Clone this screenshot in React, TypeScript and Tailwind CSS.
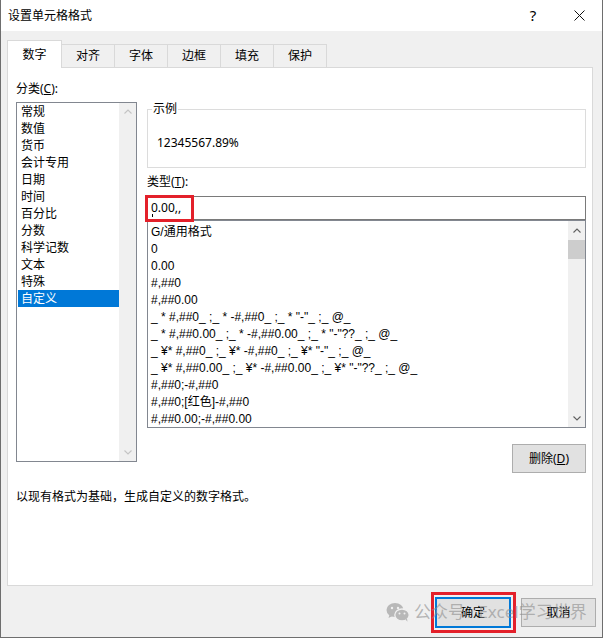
import React from "react";

const categories = [
  "常规",
  "数值",
  "货币",
  "会计专用",
  "日期",
  "时间",
  "百分比",
  "分数",
  "科学记数",
  "文本",
  "特殊",
  "自定义",
];

const formats = [
  "G/通用格式",
  "0",
  "0.00",
  "#,##0",
  "#,##0.00",
  '_ * #,##0_ ;_ * -#,##0_ ;_ * "-"_ ;_ @_',
  '_ * #,##0.00_ ;_ * -#,##0.00_ ;_ * "-"??_ ;_ @_',
  '_ ¥* #,##0_ ;_ ¥* -#,##0_ ;_ ¥* "-"_ ;_ @_',
  '_ ¥* #,##0.00_ ;_ ¥* -#,##0.00_ ;_ ¥* "-"??_ ;_ @_',
  "#,##0;-#,##0",
  "#,##0;[红色]-#,##0",
  "#,##0.00;-#,##0.00",
];

const tabs = ["对齐", "字体", "边框", "填充", "保护"];

function Chevron({ up, color }: { up?: boolean; color: string }) {
  return (
    <svg width="8" height="5" viewBox="0 0 8 5">
      <polyline
        points={up ? "0.5,4.5 4,1 7.5,4.5" : "0.5,0.5 4,4 7.5,0.5"}
        fill="none"
        stroke={color}
        strokeWidth="1.1"
      />
    </svg>
  );
}

function WeChatMark() {
  return (
    <svg width="24" height="20" viewBox="0 0 24 20">
      <ellipse cx="9" cy="8" rx="8.5" ry="7" fill="#b8b8b8" />
      <path d="M3.5 12.5 L2.5 16 L6.5 14 Z" fill="#b8b8b8" />
      <circle cx="6" cy="6" r="1.2" fill="#f0f0f0" />
      <circle cx="12" cy="6" r="1.2" fill="#f0f0f0" />
      <ellipse cx="16" cy="13" rx="7.2" ry="6" fill="#b8b8b8" stroke="#f0f0f0" strokeWidth="1.3" />
      <path d="M19.5 17.5 L21.5 19.8 L21 16.5 Z" fill="#b8b8b8" />
      <circle cx="13.5" cy="11.5" r="1" fill="#f0f0f0" />
      <circle cx="18.5" cy="11.5" r="1" fill="#f0f0f0" />
    </svg>
  );
}

export default function App() {
  return (
    <div className="font-['Noto_Sans','Noto_Sans_CJK_SC',sans-serif] relative w-[603px] h-[638px] bg-[#f0f0f0] border-l border-r border-b border-[#6e6e6e] text-[12px] text-black flex flex-col overflow-hidden">
      {/* caption bar */}
      <div className="h-[31px] bg-white flex items-center justify-between shrink-0">
        <span className="pl-[7px] leading-[16px]">设置单元格格式</span>
        <div className="flex h-full">
          <div className="w-[46px] flex items-center justify-center text-[15px] leading-none">?</div>
          <div className="w-[46px] flex items-center justify-center">
            <svg width="11" height="11" viewBox="0 0 11 11">
              <path d="M0.5 0.5 L10.5 10.5 M10.5 0.5 L0.5 10.5" stroke="#111" strokeWidth="1" />
            </svg>
          </div>
        </div>
      </div>

      {/* tab strip */}
      <div className="flex items-end h-[27px] ml-[6px] mt-[9px] shrink-0">
        <div className="relative z-10 w-[55px] h-[28px] mb-[-1px] bg-white border border-b-0 border-[#d9d9d9] flex items-center justify-center leading-[16px]">
          数字
        </div>
        {tabs.map((t) => (
          <div
            key={t}
            className="w-[53px] h-[23px] bg-[#f0f0f0] border-t border-r border-[#d9d9d9] flex items-center justify-center leading-[16px]"
          >
            {t}
          </div>
        ))}
      </div>

      {/* tab page */}
      <div className="ml-[6px] w-[586px] h-[519px] bg-white border border-[#d9d9d9] pl-[8px] pt-[13px] shrink-0">
        <div className="flex items-start">
          {/* category list */}
          <div className="w-[121px] flex flex-col">
            <div className="leading-[16px]">
              分类(<span className="underline">C</span>):
            </div>
            <div className="mt-[5px] h-[360px] border border-[#828790] flex">
              <div className="flex-1 min-w-0">
                {categories.map((c, i) => (
                  <div
                    key={c}
                    className={
                      i === categories.length - 1
                        ? "ml-[1px] h-[17px] leading-[17px] pl-[3px] bg-[#0078d7] text-white"
                        : "ml-[1px] h-[17px] leading-[17px] pl-[3px]"
                    }
                  >
                    {c}
                  </div>
                ))}
              </div>
              <div className="w-[17px] bg-[#f0f0f0] flex flex-col justify-between">
                <div className="h-[17px] flex items-center justify-center">
                  <Chevron up color="#c4c4c4" />
                </div>
                <div className="h-[17px] flex items-center justify-center">
                  <Chevron color="#c4c4c4" />
                </div>
              </div>
            </div>
          </div>

          {/* right side */}
          <div className="w-[439px] ml-[10px] flex flex-col">
            <fieldset className="mt-[20px] h-[67px] border border-[#dcdcdc] m-0 p-0">
              <legend className="ml-[4px] px-[1px] leading-[16px]">示例</legend>
              <div className="mt-[18px] pl-[9px] leading-[16px]">12345567.89%</div>
            </fieldset>

            <div className="mt-[6px] leading-[16px]">
              类型(<span className="underline">T</span>):
            </div>
            <div className="relative mt-[6px] h-[24px] border border-[#7a7a7a] pl-[3px] leading-[22px]">
              0.00,,
              <span className="absolute left-[4px] top-[17px] w-px h-[3px] bg-black" />
              <span className="absolute left-[-3px] top-[-2px] w-[49px] h-[27px] border-[3px] border-[#e3202a]" />
            </div>

            <div className="h-[208px] border border-[#828790] flex">
              <div className="flex-1 min-w-0 pt-[3px] whitespace-pre font-['Liberation_Sans','Noto_Sans_CJK_SC',sans-serif]">
                {formats.map((f) => (
                  <div key={f} className="h-[17px] leading-[17px] pl-[3px]">
                    {f}
                  </div>
                ))}
              </div>
              <div className="w-[17px] bg-[#f0f0f0] flex flex-col">
                <div className="h-[19px] flex items-center justify-center">
                  <Chevron up color="#606060" />
                </div>
                <div className="h-[19px] bg-[#cdcdcd]" />
                <div className="flex-1" />
                <div className="h-[18px] flex items-center justify-center">
                  <Chevron color="#606060" />
                </div>
              </div>
            </div>

            <div className="self-end mt-[16px] w-[74px] h-[29px] bg-[#e1e1e1] border border-[#adadad] flex items-center justify-center leading-[16px]">
              删除(<span className="underline">D</span>)
            </div>
          </div>
        </div>

        <div className="mt-[16px] leading-[16px]">以现有格式为基础，生成自定义的数字格式。</div>
      </div>

      {/* dialog buttons */}
      <div className="flex justify-end items-center gap-[10px] pr-[6px] mt-[11px]">
        <div className="relative">
          <div className="w-[76px] h-[31px] bg-[#e1e1e1] border-2 border-[#0078d7] flex items-center justify-center leading-[16px]">
            确定
          </div>
          <span className="absolute left-[-4px] right-[-5px] top-[-5px] bottom-[-5px] border-[3px] border-[#e3202a]" />
        </div>
        <div className="w-[75px] h-[29px] bg-[#e1e1e1] border border-[#adadad] flex items-center justify-center leading-[16px]">
          取消
        </div>
      </div>

      {/* account watermark */}
      <div className="absolute left-[385px] top-[602px] flex items-center gap-[4px] pointer-events-none">
        <WeChatMark />
        <span className="text-[17px] leading-[20px] text-[rgba(140,140,140,0.6)] whitespace-nowrap">
          公众号 · Excel学习世界
        </span>
      </div>
    </div>
  );
}
